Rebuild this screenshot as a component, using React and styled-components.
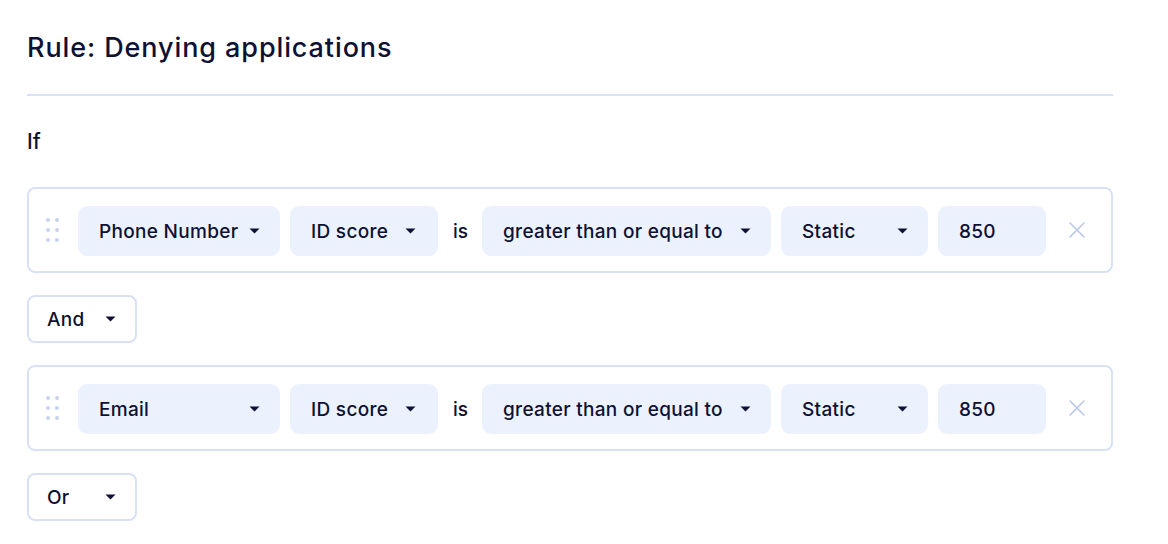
import React from "react";
import styled, { createGlobalStyle } from "styled-components";

const GlobalStyle = createGlobalStyle`
   body {
      margin: 0;
      background: #ffffff;
      font-family: "Inter", "Noto Sans", sans-serif;
      color: #0e1133;
   }
`;

const Page = styled.div`
   width: 1086px;
   padding: 0 27px;
   display: flex;
   flex-direction: column;
   align-items: flex-start;
`;

const Title = styled.h1`
   margin: 32px 0 0;
   font-size: 27px;
   line-height: 32px;
   font-weight: 500;
   letter-spacing: 0.9px;
`;

const Divider = styled.hr`
   align-self: stretch;
   margin: 30px 0 0;
   border: none;
   height: 2px;
   background: #d8e1f6;
`;

const Label = styled.div`
   margin-top: 34px;
   font-size: 21px;
   line-height: 24px;
   font-weight: 500;
`;

const ConditionCard = styled.div`
   align-self: stretch;
   margin-top: ${(p) => p.$top}px;
   height: 82px;
   border: 2px solid #d8e1f6;
   border-radius: 8px;
   display: flex;
   align-items: center;
   padding: 0 17px;
`;

const Handle = styled.div`
   display: grid;
   grid-template-columns: repeat(2, 4px);
   grid-auto-rows: 4px;
   column-gap: 5px;
   row-gap: 6px;
   margin-right: 19px;
   span {
      border-radius: 50%;
      background: #c9d3ee;
   }
`;

const Fields = styled.div`
   display: flex;
   align-items: center;
   gap: 10px;
   padding-top: 2px;
`;

const Pill = styled.div`
   width: ${(p) => p.$w}px;
   height: 50px;
   box-sizing: border-box;
   background: #ecf2fd;
   border-radius: 9px;
   display: flex;
   align-items: center;
   justify-content: space-between;
   padding: 0 ${(p) => p.$pr || 20}px 0 21px;
   font-size: 19px;
   font-weight: 500;
   letter-spacing: 0.3px;
`;

const Word = styled.span`
   font-size: 19px;
   font-weight: 500;
   margin: 0 4px 0 5px;
`;

const Remove = styled.button`
   margin-left: 22px;
   border: none;
   background: none;
   padding: 0;
   display: flex;
   cursor: pointer;
`;

const Joiner = styled.div`
   margin-top: 22px;
   width: 110px;
   height: 48px;
   box-sizing: border-box;
   border: 2px solid #d8e1f6;
   border-radius: 8px;
   display: flex;
   align-items: center;
   justify-content: space-between;
   padding: 0 19px 0 18px;
   font-size: 19px;
   font-weight: 500;
   letter-spacing: 0.3px;
`;

const Caret = () => (
   <svg width="11" height="6" viewBox="0 0 11 6">
      <path d="M0.5 0.5 L10.5 0.5 L5.5 5.5 Z" fill="#0e1133" />
   </svg>
);

const Select = ({ w, pr, children }) => (
   <Pill $w={w} $pr={pr}>
      <span>{children}</span>
      <Caret />
   </Pill>
);

const Condition = ({ field, top }) => (
   <ConditionCard $top={top}>
      <Handle>
         {[0, 1, 2, 3, 4, 5].map((i) => (
            <span key={i} />
         ))}
      </Handle>
      <Fields>
         <Select w={202}>{field}</Select>
         <Select w={148} pr={22}>ID score</Select>
         <Word>is</Word>
         <Select w={289}>greater than or equal to</Select>
         <Select w={147}>Static</Select>
         <Pill $w={108}>
            <span>850</span>
         </Pill>
      </Fields>
      <Remove aria-label="Remove condition">
         <svg width="18" height="18" viewBox="0 0 18 18">
            <path d="M2 2 L16 16 M16 2 L2 16" stroke="#b9c7ea" strokeWidth="1.6" strokeLinecap="round" />
         </svg>
      </Remove>
   </ConditionCard>
);

export default function App() {
   return (
      <>
         <GlobalStyle />
         <Page>
            <Title>Rule: Denying applications</Title>
            <Divider />
            <Label>If</Label>
            <Condition field="Phone Number" top={33} />
            <Joiner>
               <span>And</span>
               <Caret />
            </Joiner>
            <Condition field="Email" top={22} />
            <Joiner>
               <span>Or</span>
               <Caret />
            </Joiner>
         </Page>
      </>
   );
}
